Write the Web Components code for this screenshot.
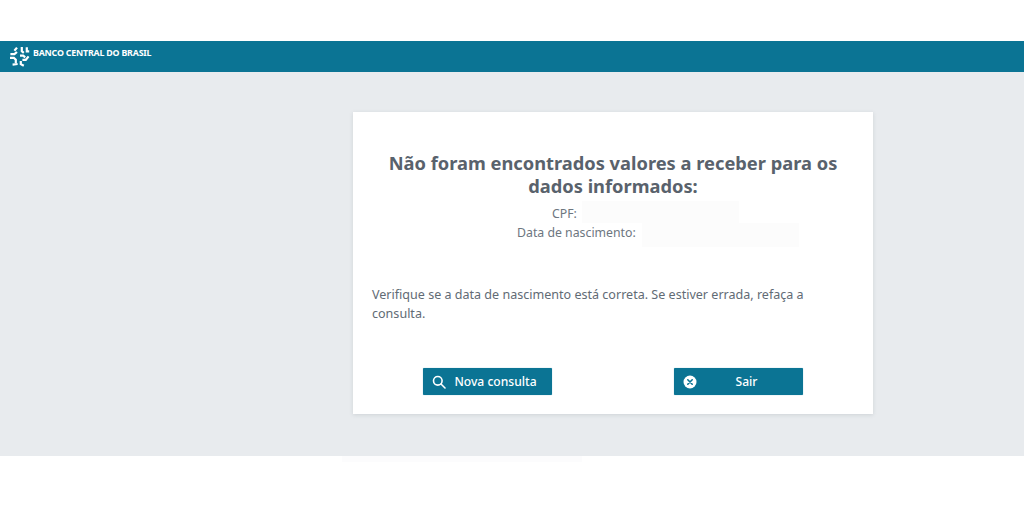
<!DOCTYPE html>
<html lang="pt-BR"><head><meta charset="utf-8"><title>Valores a receber</title>
<style>html,body{margin:0;padding:0;background:#fff;overflow:hidden}body{width:1024px;height:512px;font-family:"Noto Sans","Open Sans",sans-serif}</style>
</head><body>
<bc-page>
  <bc-header slot="header">BANCO CENTRAL DO BRASIL</bc-header>
  <bc-card>
    <span slot="title">Não foram encontrados valores a receber para os dados informados:</span>
    <bc-field label="CPF:" style="--start:180px;--gap:5px;--top:-3px;--h:22px"></bc-field>
    <bc-field label="Data de nascimento:" style="--start:145px;--gap:6px;--top:0px;--h:24px"></bc-field>
    <span slot="message">Verifique se a data de nascimento está correta. Se estiver errada, refaça a consulta.</span>
    <bc-button slot="actions" icon="search">Nova consulta</bc-button>
    <bc-button slot="actions" icon="close">Sair</bc-button>
  </bc-card>
</bc-page>
<script>
function def(name,html,init){customElements.define(name,class extends HTMLElement{connectedCallback(){if(this.shadowRoot)return;const r=this.attachShadow({mode:'open'});r.innerHTML=html;if(init)init(this,r);}});}
def('bc-page',`<style>
:host{display:flex;flex-direction:column;width:1024px;height:512px;padding-top:41px;box-sizing:border-box}
.main{height:384px;background:#e8ebee;box-sizing:border-box;padding:40px 0 0 353px}
.after{height:56px;background:#fff}
.ghost{width:240px;height:6px;margin-left:342px;background:#fcfcfd}
</style><slot name="header"></slot><div class="main"><slot></slot></div><div class="after"><div class="ghost"></div></div>`);
def('bc-header',`<style>
:host{display:flex;align-items:center;gap:3px;height:31px;background:#0b7494;color:#fff;padding:0 0 7px 9px;box-sizing:border-box;font:700 8.85px "Noto Sans",sans-serif;letter-spacing:-.2px;white-space:nowrap}
svg{width:21px;height:21px;display:block;margin-top:6px}
</style><svg viewBox="0 0 21 21" fill="none" stroke="#fff" stroke-width="2.2" stroke-linecap="butt" stroke-linejoin="miter"><path d="M8 1.6 5.4 4.8"/><path d="M1.4 8.2h4L8 6"/><path d="M12.8 1v4.2l2 1.6"/><path d="M17.8 1.2v4.2h2.4"/><path d="M1 11.8h3.8l2 2V17"/><path d="M3.6 18.6l5-.6"/><path d="M11 9.6h3.2l2 1.8"/><path d="M19.6 10.4 16.8 13.8h-3.4"/><path d="M11.8 15v3.2l3 1.6"/></svg><slot></slot>`);
def('bc-card',`<style>
:host{display:flex;flex-direction:column;width:520px;height:302px;background:#fff;box-shadow:0 1px 4px rgba(60,70,80,.14);box-sizing:border-box;padding:39px 19px 0;color:#5f6973}
h1{margin:0 0 6.5px;text-align:center;font:700 18.3px/23px "Noto Sans",sans-serif;color:#59626c}
.fields{display:flex;flex-direction:column;color:#6d767f}
p{margin:43px 0 0;padding-right:30px;font:400 12.55px/19px "Noto Sans",sans-serif;color:#626b75}
.actions{display:flex;justify-content:space-between;margin:45.5px 51px 0}
</style><h1><slot name="title"></slot></h1><div class="fields"><slot></slot></div><p><slot name="message"></slot></p><div class="actions"><slot name="actions"></slot></div>`);
def('bc-field',`<style>
:host{display:flex;align-items:center;gap:var(--gap);height:19px;padding-left:var(--start);font:400 12.3px "Noto Sans",sans-serif}
.slot{position:relative;width:157px;height:19px}
.mask{position:absolute;left:0;right:0;top:var(--top);height:var(--h);background:#fcfcfc}
</style><span id="l"></span><span class="slot"><span class="mask"></span></span>`,(el,r)=>{r.getElementById('l').textContent=el.getAttribute('label')});
const icons={search:`<svg viewBox="0 0 14 14" fill="none" stroke="#fff" stroke-width="1.6" stroke-linecap="round"><circle cx="5.8" cy="5.8" r="4.3"/><path d="m9 9 4 4"/></svg>`,close:`<svg viewBox="0 0 14 14"><circle cx="7" cy="7" r="6.5" fill="#fff"/><path d="m4.8 4.8 4.4 4.4m0-4.4-4.4 4.4" stroke="#0b7494" stroke-width="1.6" stroke-linecap="round"/></svg>`};
def('bc-button',`<style>
:host{display:flex;align-items:center;width:129px;height:27px;background:#0b7494;color:#fff;border-radius:1px;box-sizing:border-box;padding:0 9px;font:500 12.1px "Noto Sans",sans-serif;box-shadow:0 0 1px rgba(11,116,148,.6)}
#i{width:14px;height:14px;display:block;flex:none}
#i svg{display:block;width:14px;height:14px}
.t{flex:1;text-align:center;white-space:nowrap;padding-left:2px}
</style><span id="i"></span><span class="t"><slot></slot></span>`,(el,r)=>{r.getElementById('i').innerHTML=icons[el.getAttribute('icon')]});
</script>
</body></html>
